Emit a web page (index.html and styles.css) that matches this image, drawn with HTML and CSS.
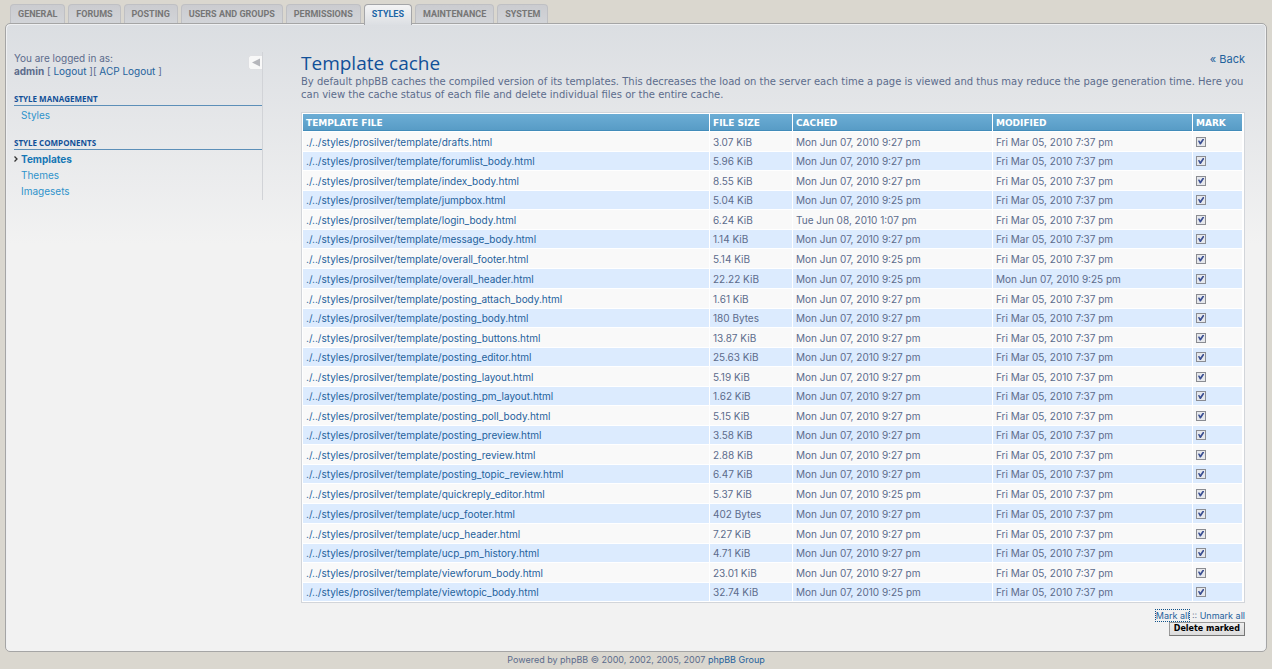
FILE: index.html
```html
<!DOCTYPE html>
<html lang="en">
<head>
<meta charset="utf-8">
<title>Template cache</title>
<link rel="stylesheet" href="styles.css">
</head>
<body>
<nav class="tabs">
<a class="tab" href="#">GENERAL</a>
<a class="tab" href="#">FORUMS</a>
<a class="tab" href="#">POSTING</a>
<a class="tab" href="#">USERS AND GROUPS</a>
<a class="tab" href="#">PERMISSIONS</a>
<a class="tab tab-active" href="#">STYLES</a>
<a class="tab" href="#">MAINTENANCE</a>
<a class="tab" href="#">SYSTEM</a>
</nav>
<div class="panel">
<aside class="menu">
<div class="login">
<p>You are logged in as:<br><strong>admin</strong> [ <a href="#">Logout</a> ][ <a href="#">ACP Logout</a> ]</p>
<button class="toggle" type="button" aria-label="Hide menu"><svg width="10" height="9" viewBox="0 0 10 9"><path d="M9 0.5v8L1 4.5z" fill="#b5b6bb"/></svg></button>
</div>
<h2 class="menu-title">STYLE MANAGEMENT</h2>
<ul class="menu-list">
<li><a href="#">Styles</a></li>
</ul>
<h2 class="menu-title">STYLE COMPONENTS</h2>
<ul class="menu-list">
<li class="current"><svg class="marker" width="4" height="6" viewBox="0 0 4 6"><path d="M0.5 0.5L3 3L0.5 5.5" fill="none" stroke="#333" stroke-width="1.3"/></svg><a href="#">Templates</a></li>
<li><a href="#">Themes</a></li>
<li><a href="#">Imagesets</a></li>
</ul>
</aside>
<main class="main">
<a class="back" href="#">« Back</a>
<h1 class="title">Template cache</h1>
<p class="intro">By default phpBB caches the compiled version of its templates. This decreases the load on the server each time a page is viewed and thus may reduce the page generation time. Here you can view the cache status of each file and delete individual files or the entire cache.</p>
<form>
<table class="cache">
<colgroup><col class="col-file"><col class="col-size"><col class="col-date"><col class="col-date"><col class="col-mark"></colgroup>
<thead><tr><th>TEMPLATE FILE</th><th>FILE SIZE</th><th>CACHED</th><th>MODIFIED</th><th>MARK</th></tr></thead>
<tbody id="rows"></tbody>
</table>
<p class="marks"><a class="focused" href="#">Mark all</a> :: <a href="#">Unmark all</a></p>
<div class="actions"><button class="delete" type="button">Delete marked</button></div>
</form>
</main>
</div>
<footer class="footer">Powered by phpBB © 2000, 2002, 2005, 2007 <a href="#">phpBB Group</a></footer>
<script src="rows.js"></script>
</body>
</html>
```
FILE: rows.js
```js
const late = "Mon Jun 07, 2010 9:27 pm";
const early = "Mon Jun 07, 2010 9:25 pm";
const original = "Fri Mar 05, 2010 7:37 pm";
const files = [
  ["drafts", "3.07 KiB", late],
  ["forumlist_body", "5.96 KiB", late],
  ["index_body", "8.55 KiB", late],
  ["jumpbox", "5.04 KiB", early],
  ["login_body", "6.24 KiB", "Tue Jun 08, 2010 1:07 pm"],
  ["message_body", "1.14 KiB", late],
  ["overall_footer", "5.14 KiB", early],
  ["overall_header", "22.22 KiB", early, early],
  ["posting_attach_body", "1.61 KiB", late],
  ["posting_body", "180 Bytes", late],
  ["posting_buttons", "13.87 KiB", late],
  ["posting_editor", "25.63 KiB", late],
  ["posting_layout", "5.19 KiB", late],
  ["posting_pm_layout", "1.62 KiB", late],
  ["posting_poll_body", "5.15 KiB", late],
  ["posting_preview", "3.58 KiB", late],
  ["posting_review", "2.88 KiB", late],
  ["posting_topic_review", "6.47 KiB", late],
  ["quickreply_editor", "5.37 KiB", early],
  ["ucp_footer", "402 Bytes", late],
  ["ucp_header", "7.27 KiB", late],
  ["ucp_pm_history", "4.71 KiB", late],
  ["viewforum_body", "23.01 KiB", late],
  ["viewtopic_body", "32.74 KiB", early]
];
document.getElementById("rows").innerHTML = files.map(([name, size, cached, modified = original]) =>
  `<tr><td><a href="#">./../styles/prosilver/template/${name}.html</a></td><td>${size}</td><td>${cached}</td><td>${modified}</td><td><input class="check" type="checkbox" aria-label="Mark ${name}" checked></td></tr>`
).join("");
```
FILE: styles.css
```css
* { box-sizing: border-box; }
body {
  margin: 0;
  padding: 4px 5px 0;
  background: #dad7cf;
  color: #5c6c8c;
  font: 10px/13px Inter, Verdana, sans-serif;
}
a { color: #1f629c; text-decoration: none; }
p, h1, h2, ul { margin: 0; padding: 0; }
.tabs { display: flex; gap: 3px; padding-left: 5px; }
.tab {
  height: 19px;
  padding: 0 7px;
  border: 1px solid #bfc0c4;
  border-bottom: 0;
  border-radius: 4px 4px 0 0;
  background: linear-gradient(#cbccd0, #d2d4d8);
  color: #767676;
  font: bold 9px/19px Roboto, Tahoma, sans-serif;
}
.tab-active {
  position: relative;
  height: 21px;
  margin-bottom: -2px;
  border-color: #a4a5a8;
  background: linear-gradient(#f4f4f5, #dcdfe3);
  color: #1c66a6;
}
.panel {
  display: flex;
  align-items: flex-start;
  gap: 38px;
  padding: 28px 21px 15px 8px;
  border: 1px solid #a5a5a5;
  border-radius: 5px;
  background: linear-gradient(#dbdee2, #f2f2f2 220px);
  box-shadow: inset 1px 1px 0 #eff0f2, inset -1px 0 0 #eff0f2;
}
.menu { flex: 0 0 249px; height: 148px; border-right: 1px solid #d1d3d7; }
.login { display: flex; justify-content: space-between; align-items: flex-start; margin-bottom: 15px; }
.toggle {
  display: flex;
  align-items: center;
  justify-content: center;
  width: 14px;
  height: 15px;
  margin-top: 3px;
  padding: 0;
  border: 1px solid #dfe0e3;
  border-right: 0;
  border-radius: 3px 0 0 3px;
  background: #f8f8f8;
}
.menu-title {
  border-bottom: 1px solid #5c8fb8;
  color: #115098;
  font: bold 8px/12px "Open Sans", Tahoma, sans-serif;
}
.menu-list { margin-bottom: 14px; padding-top: 1px; list-style: none; }
.menu-list li { display: flex; align-items: center; padding-left: 7px; line-height: 16px; }
.menu-list a { color: #2f93cb; }
.menu-list .current { padding-left: 0; gap: 3px; font-weight: bold; }
.menu-list .current a { color: #1577b5; }
.main { flex: 1; min-width: 0; }
.back { float: right; font-size: 11px; line-height: 15px; }
.title { color: #115098; font: 19px/22px "Open Sans", "Trebuchet MS", sans-serif; }
.intro { padding-top: 1px; font-family: "DejaVu Sans", Verdana, sans-serif; }
.cache {
  width: 100%;
  margin-top: 11px;
  padding-right: 1px;
  border: 1px solid #d2d5da;
  border-spacing: 1px;
  background: #fff;
  table-layout: fixed;
}
.col-size { width: 82px; }
.col-date { width: 199px; }
.col-mark { width: 49px; }
.cache th {
  height: 17px;
  padding: 3px 3px 0;
  border-bottom: 1px solid #428cba;
  background: linear-gradient(#6cadd5, #589cc6);
  color: #fff;
  font: bold 9px/13px "DejaVu Sans", Verdana, sans-serif;
  text-align: left;
}
.cache td { height: 19px; padding: 0 3px; background: #f9f9f9; line-height: 18px; }
.cache tr:nth-child(even) td { height: 18px; background: #dcebfe; }
.cache tr:nth-child(12n + 8) td { height: 19px; }
.check {
  display: block;
  position: relative;
  width: 10px;
  height: 10px;
  margin: 0;
  appearance: none;
  border: 1px solid #8a8c92;
  background: #e6e8ec;
}
.check:checked::after {
  content: "";
  position: absolute;
  inset: 1px;
  background: #3b4f92;
  clip-path: polygon(0 40%, 18% 30%, 40% 60%, 80% 0, 100% 0, 100% 20%, 48% 100%, 30% 100%);
}
.marks { margin-top: 6px; font-size: 9px; text-align: right; }
.focused { outline: 1px dotted #105289; }
.actions { display: flex; justify-content: flex-end; }
.delete {
  height: 14px;
  padding: 0 4px;
  border: 1px solid #777;
  border-top-color: #999;
  border-left-color: #999;
  background: linear-gradient(#efefef, #dcdcdc);
  color: #000;
  font: bold 8px/12px "DejaVu Sans", Verdana, sans-serif;
}
.footer { padding-top: 1px; font-size: 9px; text-align: center; }
```
